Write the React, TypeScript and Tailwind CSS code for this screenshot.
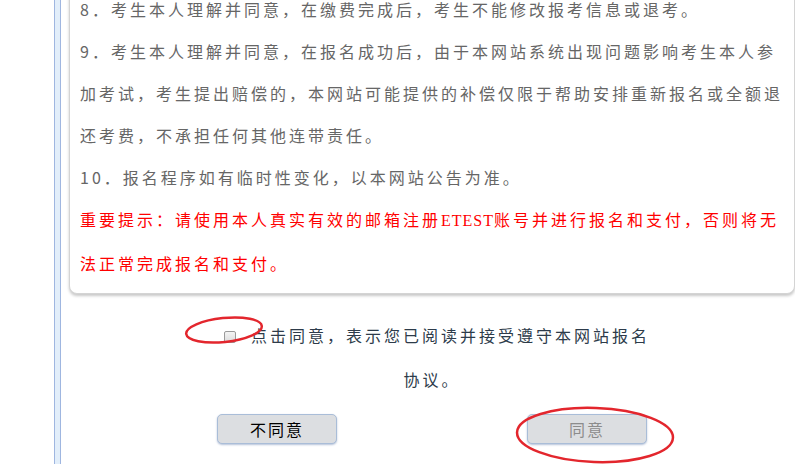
const TERMS = [
  '8．考生本人理解并同意，在缴费完成后，考生不能修改报考信息或退考。',
  '9．考生本人理解并同意，在报名成功后，由于本网站系统出现问题影响考生本人参加考试，考生提出赔偿的，本网站可能提供的补偿仅限于帮助安排重新报名或全额退还考费，不承担任何其他连带责任。',
  '10．报名程序如有临时性变化，以本网站公告为准。',
]

function Notice() {
  return (
    <p className="text-[#f00]">
      重要提示：请使用本人真实有效的邮箱注册
      <span className="font-['Liberation_Serif',serif] tracking-[1px]">ETEST</span>
      账号并进行报名和支付，否则将无法正常完成报名和支付。
    </p>
  )
}

export default function App() {
  return (
    <div className="relative h-[464px] w-[795px] overflow-hidden bg-white font-['Noto_Sans_CJK_SC',sans-serif]">
      <div className="flex h-full">
        {/* left frame stripe */}
        <div className="ml-[54px] w-[7px] shrink-0 border-x border-[#9fb6e0] bg-[#e2eefa]" />

        <main className="ml-[8px] flex-1">
          <div className="-mt-[22px] rounded-b-[8px] border border-t-0 border-[#d4d4d4] bg-white px-[10px] pt-[10px] pb-[9px] text-[16px] leading-[42px] tracking-[3px] text-[#666] shadow-[0_2px_3px_rgba(0,0,0,0.22)]">
            {TERMS.map((t) => (
              <p key={t}>{t}</p>
            ))}
            <Notice />
          </div>

          <p className="mx-auto mt-[19px] w-[440px] text-center text-[16px] leading-[44px] tracking-[3px] text-[#2d3b4a]">
            <span className="ml-[10px] mr-[15px] inline-block h-[12px] w-[12px] rounded-[2px] border border-[#9a9a9a] bg-gradient-to-b from-[#f4f4f4] to-[#dcdcdc] align-[-1px]" />
            点击同意，表示您已阅读并接受遵守本网站报名协议。
          </p>

          <div className="mt-[13px] flex justify-center gap-[190px]">
            <button className="h-[30px] w-[120px] rounded-[5px] border border-[#a9bdd8] bg-[#dcdee1] text-[16px] tracking-[2px] text-black shadow-[0_1px_2px_rgba(90,120,170,0.45)]">
              不同意
            </button>
            <button
              disabled
              className="h-[30px] w-[120px] rounded-[5px] border border-[#a9bdd8] bg-[#dcdee1] text-[16px] tracking-[2px] text-[#8c8c8c] shadow-[0_1px_2px_rgba(90,120,170,0.45)]"
            >
              同意
            </button>
          </div>
        </main>
      </div>

      {/* red annotation marks over the screenshot */}
      <svg className="pointer-events-none absolute inset-0" width="795" height="464">
        <ellipse cx="224" cy="330" rx="38" ry="12" transform="rotate(-6 224 330)" fill="none" stroke="#e3262d" strokeWidth="2.5" />
        <ellipse cx="595" cy="435" rx="78" ry="27" transform="rotate(2 595 435)" fill="none" stroke="#e3262d" strokeWidth="2.5" />
      </svg>
    </div>
  )
}
